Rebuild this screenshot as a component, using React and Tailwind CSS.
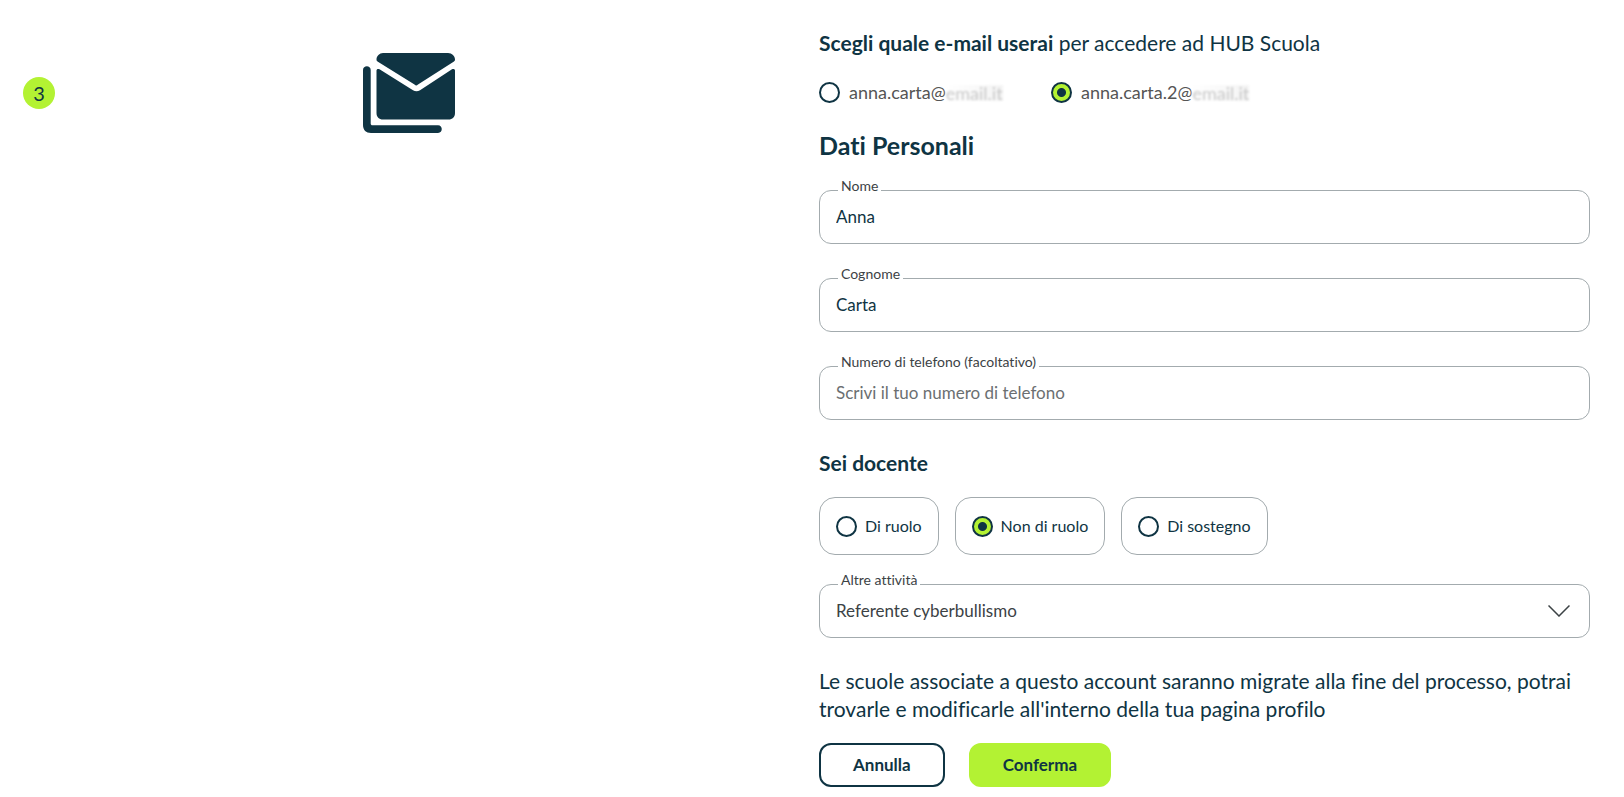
import React, { useState } from 'react';

const emails = [
  { id: 'email-1', user: 'anna.carta@', domain: 'email.it' },
  { id: 'email-2', user: 'anna.carta.2@', domain: 'email.it' },
];

const roles = [
  { id: 'ruolo', label: 'Di ruolo' },
  { id: 'non-ruolo', label: 'Non di ruolo' },
  { id: 'sostegno', label: 'Di sostegno' },
];

const MailsIcon = () => (
  <svg width="92" height="80" viewBox="0 0 92 80" fill="#0f3443" aria-hidden="true">
    <path d="M20 0H85C89 0 92 3 92 6.500C92 7.500 91.600 8 91 8.500L55 31.500C53.600 32.700 52.800 32.700 51.500 31.500L14.500 8.500C13.900 8 13.500 7.500 13.500 6.500C13.500 3 16.500 0 20 0Z" />
    <path d="M13.500 17.500C13.500 16 15 15.500 16.500 16.300L50 37.300C52.300 38.700 54.700 38.700 57 37.300L89 16.300C90.500 15.500 92 16 92 17.500V60C92 64 89.500 66.500 85.500 66.500H20C16 66.500 13.500 64 13.500 60Z" />
    <path d="M0 17C0 12 7.700 12 7.700 17V70.500C7.700 71.700 8.300 72.300 9.500 72.300H75C80 72.300 80 80 75 80H8C3 80 0 77 0 72Z" />
  </svg>
);

const Radio = ({ id, name, checked, onChange }) => (
  <input
    id={id}
    type="radio"
    name={name}
    checked={checked}
    onChange={onChange}
    className="w-[21px] h-[21px] shrink-0 appearance-none rounded-full border-2 border-[#0f3443] bg-white checked:bg-[radial-gradient(circle,#0f3443_4px,#b3f233_5px)]"
  />
);

const Field = ({ id, label, children }) => (
  <div className="relative">
    <label htmlFor={id} className="absolute -top-3 left-[19px] bg-white px-[3px] text-[14px] leading-4 text-[#3c4245]">
      {label}
    </label>
    {children}
  </div>
);

const inputClass =
  'block w-full h-[54px] rounded-xl border border-[#a3abae] bg-white px-4 pb-[2px] text-[17px] text-[#0f3443] placeholder:text-[#6b6f71] outline-none focus:border-[#0f3443]';

const App = () => {
  const [email, setEmail] = useState('email-2');
  const [role, setRole] = useState('non-ruolo');

  return (
    <div className="grid grid-cols-2 gap-[25px] pl-[23px] pr-[34px] bg-white text-[#0f3443] font-['Lato',sans-serif] [font-variant-ligatures:none]">
      <div className="grid grid-cols-[1fr_auto_1fr] items-center self-start pt-[53px]">
        <span className="flex w-8 h-8 items-center justify-center rounded-full bg-[#b3f233] text-[20px]">3</span>
        <MailsIcon />
      </div>

      <form className="flex flex-col pt-[29px] pb-[10px]" onSubmit={(e) => e.preventDefault()}>
        <p className="text-[21px] leading-7">
          <strong className="font-bold">Scegli quale e-mail userai</strong> per accedere ad HUB Scuola
        </p>

        <div className="mt-[25px] flex">
          {emails.map((item) => (
            <div key={item.id} className="flex w-[232px] h-[21px] items-center gap-[9px]">
              <Radio id={item.id} name="email" checked={email === item.id} onChange={() => setEmail(item.id)} />
              <label htmlFor={item.id} className="flex whitespace-nowrap text-[18px] text-[#555555]">
                {item.user}
                <span className="self-center bg-linear-to-r from-white to-[#f4f4f4] leading-4 text-[#c8c8c8] blur-[1px]">
                  {item.domain}
                </span>
              </label>
            </div>
          ))}
        </div>

        <h1 className="mt-[26px] text-[25px] leading-8 font-bold">Dati Personali</h1>

        <div className="mt-[29px] flex flex-col gap-[34px]">
          <Field id="nome" label="Nome">
            <input id="nome" type="text" defaultValue="Anna" className={inputClass} />
          </Field>
          <Field id="cognome" label="Cognome">
            <input id="cognome" type="text" defaultValue="Carta" className={inputClass} />
          </Field>
          <Field id="telefono" label="Numero di telefono (facoltativo)">
            <input id="telefono" type="tel" placeholder="Scrivi il tuo numero di telefono" className={inputClass} />
          </Field>
        </div>

        <h2 id="docente" className="mt-[29px] text-[21px] leading-7 font-bold">Sei docente</h2>

        <div role="radiogroup" aria-labelledby="docente" className="mt-5 flex flex-wrap gap-4">
          {roles.map((item) => (
            <label
              key={item.id}
              htmlFor={item.id}
              className="flex h-[58px] items-center gap-2 rounded-2xl border border-[#a3abae] px-4 text-[16px]"
            >
              <Radio id={item.id} name="role" checked={role === item.id} onChange={() => setRole(item.id)} />
              {item.label}
            </label>
          ))}
        </div>

        <div className="mt-[29px]">
          <Field id="attivita" label="Altre attività">
            <select
              id="attivita"
              defaultValue="cyber"
              className="block w-full h-[54px] appearance-none rounded-xl border border-[#a3abae] bg-white px-4 text-[17px] text-[#3c4245] outline-none"
            >
              <option value="cyber">Referente cyberbullismo</option>
            </select>
            <svg
              className="pointer-events-none absolute right-5 top-[21px]"
              width="22"
              height="12"
              viewBox="0 0 22 12"
              fill="none"
              stroke="#3c4245"
              strokeWidth="1.5"
              aria-hidden="true"
            >
              <path d="M0.500 0.500L11 11L21.500 0.500" />
            </svg>
          </Field>
        </div>

        <p className="mt-[29px] text-[21px] leading-7">
          Le scuole associate a questo account saranno migrate alla fine del processo, potrai trovarle e modificarle
          all'interno della tua pagina profilo
        </p>

        <div className="mt-5 flex gap-6">
          <button type="button" className="h-11 rounded-xl border-2 border-[#0f3443] px-8 text-[17px] font-bold">
            Annulla
          </button>
          <button type="submit" className="h-11 rounded-xl border-2 border-[#b3f233] bg-[#b3f233] px-8 text-[17px] font-bold">
            Conferma
          </button>
        </div>
      </form>
    </div>
  );
};

export default App;
